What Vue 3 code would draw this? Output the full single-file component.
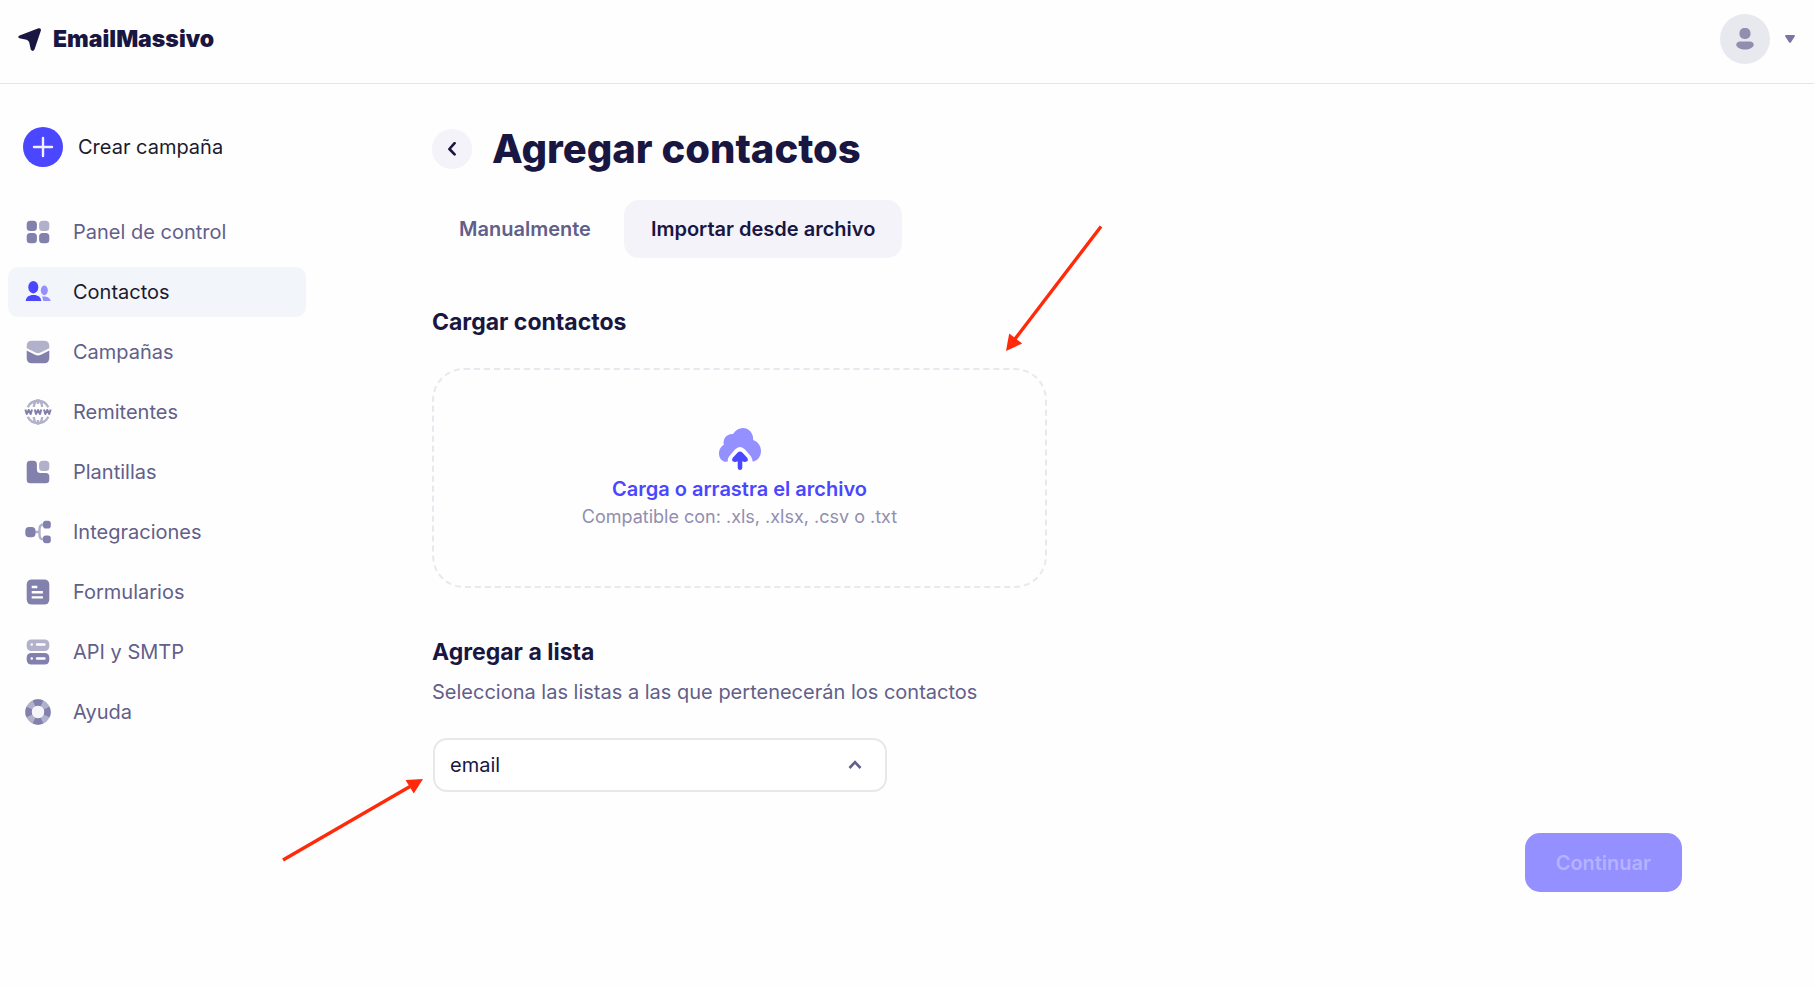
<script setup>
import { ref } from 'vue'

const navItems = [
  { id: 'panel', label: 'Panel de control' },
  { id: 'contacts', label: 'Contactos' },
  { id: 'campaigns', label: 'Campañas' },
  { id: 'senders', label: 'Remitentes' },
  { id: 'templates', label: 'Plantillas' },
  { id: 'integrations', label: 'Integraciones' },
  { id: 'forms', label: 'Formularios' },
  { id: 'api', label: 'API y SMTP' },
  { id: 'help', label: 'Ayuda' },
]
const current = ref('contacts')
const tabs = ['Manualmente', 'Importar desde archivo']
const activeTab = ref(1)
const list = ref('email')
</script>

<template>
  <div class="page">
    <header class="topbar">
      <a class="brand" href="#">
        <svg class="brand-mark" viewBox="0 0 22 22" aria-hidden="true">
          <path d="M1.5 7.2 19.6 .3Q22.3-.2 21.9 2.4L15.9 20.4Q14 23.4 12.2 20.6L10.7 13.6Q10 11.7 8.200 11.200L1.300 9.700Q-1 8.500 1.500 7.200Z" />
        </svg>
        <span>EmailMassivo</span>
      </a>
      <button class="account" type="button" aria-label="Cuenta">
        <span class="avatar">
          <svg width="18" height="22" viewBox="0 0 18 22" aria-hidden="true">
            <rect x="3.500" y="0" width="11" height="11" rx="4.800" />
            <path d="M3.500 13.500H14.500Q17.800 14 17.800 17C17 19.800 13 21.600 9 21.600S1 19.800.2 17Q.2 14 3.500 13.500Z" />
          </svg>
        </span>
        <svg class="caret" width="10" height="8" viewBox="0 0 10 8" aria-hidden="true">
          <path d="M1 0H9Q10.400.3 9.700 1.600L6 7.200Q5 8.400 4 7.200L.3 1.600Q-.4.3 1 0Z" />
        </svg>
      </button>
    </header>

    <div class="body">
      <aside class="sidebar">
        <button class="create" type="button">
          <svg width="40" height="40" viewBox="0 0 40 40" aria-hidden="true">
            <circle cx="20" cy="20" r="20" fill="#4b46ff" />
            <path d="M20 11V29M11 20H29" stroke="#f3f1ff" stroke-width="2.400" stroke-linecap="round" />
          </svg>
          <span>Crear campaña</span>
        </button>

        <nav class="nav">
          <a
            v-for="item in navItems"
            :key="item.id"
            href="#"
            class="nav-item"
            :class="{ active: item.id === current }"
            @click.prevent="current = item.id"
          >
            <svg class="nav-icon" viewBox="0 0 28 28" aria-hidden="true">
              <g v-if="item.id === 'panel'">
                <rect class="dark" x="2.700" y="2.700" width="10.200" height="10.200" rx="3.500" />
                <rect class="light" x="15.100" y="2.700" width="10.200" height="10.200" rx="3.500" />
                <rect class="dark" x="2.700" y="15.100" width="10.200" height="10.200" rx="3.500" />
                <rect class="dark" x="15.100" y="15.100" width="10.200" height="10.200" rx="3.500" />
              </g>
              <g v-else-if="item.id === 'contacts'">
                <ellipse class="dark" cx="9.300" cy="9.200" rx="5" ry="6.200" />
                <path class="dark" d="M1.700 23C2 19.200 4.600 17 9.500 17S16.800 19.200 17.300 23Z" />
                <ellipse class="light" cx="20.300" cy="12.400" rx="3.500" ry="4.800" />
                <path class="light" d="M18 18.700C22.500 18 26 19.500 26.700 23H19.200Q19 20.500 18 18.700Z" />
              </g>
              <g v-else-if="item.id === 'campaigns'">
                <path class="light" d="M8 2.700H20Q25.300 2.700 25.300 8V10.200L16.500 14.600Q14 15.800 11.500 14.600L2.700 10.200V8Q2.700 2.700 8 2.700Z" />
                <path class="dark" d="M2.700 12.600 11 16.800Q14 18.200 17 16.800L25.300 12.600V20Q25.300 25.300 20 25.300H8Q2.700 25.300 2.700 20Z" />
              </g>
              <g v-else-if="item.id === 'senders'">
                <g class="light-line">
                  <path d="M3.700 9.200A11.500 11.500 0 0 1 24.300 9.200M3.700 18.800A11.500 11.500 0 0 0 24.300 18.800M9.800 9C10.700 0 17.300 0 18.200 9M9.800 19C10.700 28 17.300 28 18.200 19M14 2.500V6M14 22V25.500" />
                </g>
                <path class="dark-line" d="M1.400 11.500 2.700 16 4.700 12 6.700 16 8 11.500M10.700 11.500 12 16 14 12 16 16 17.300 11.500M20 11.500 21.300 16 23.300 12 25.300 16 26.600 11.500" />
              </g>
              <g v-else-if="item.id === 'templates'">
                <path class="dark" d="M6.200 2.700H9.400Q12.900 2.700 12.900 6.200V11.500Q12.900 15.100 16.500 15.100H21.800Q25.300 15.100 25.300 18.600V21.800Q25.300 25.300 21.800 25.300H6.200Q2.700 25.300 2.700 21.800V6.200Q2.700 2.700 6.200 2.700Z" />
                <rect class="light" x="15.100" y="2.700" width="10.200" height="10.200" rx="3.500" />
              </g>
              <g v-else-if="item.id === 'integrations'">
                <path class="light-line" d="M10 14H15.500M20 6.500Q15.500 6.500 15.500 11V17Q15.500 21.500 20 21.500" />
                <rect class="dark" x="1.300" y="9" width="10.200" height="10.200" rx="3.800" />
                <rect class="dark" x="19" y="2.700" width="7.800" height="7.800" rx="2.800" />
                <rect class="dark" x="19" y="17.500" width="7.800" height="7.800" rx="2.800" />
              </g>
              <g v-else-if="item.id === 'forms'">
                <rect class="dark" x="2.700" y="1.400" width="22.600" height="25.200" rx="5" />
                <path class="cut" d="M7.700 9H13.300M7.700 14.200H18.900M7.700 19.400H18.900" />
              </g>
              <g v-else-if="item.id === 'api'">
                <rect class="light" x="2.700" y="1.400" width="22.600" height="11.600" rx="4.500" />
                <rect class="dark" x="2.700" y="15" width="22.600" height="11.600" rx="4.500" />
                <path class="cut round" d="M7.700 6.500H7.800M13 6.500H20.500M7.700 20.500H7.800M13 20.500H20.500" />
              </g>
              <g v-else>
                <circle class="ring-light" cx="14" cy="14" r="9.400" />
                <circle class="ring-dark" cx="14" cy="14" r="9.400" pathLength="80" />
                <circle cx="14" cy="14" r="6.200" fill="#f5f5f9" />
              </g>
            </svg>
            <span>{{ item.label }}</span>
          </a>
        </nav>
      </aside>

      <main class="content">
        <div class="title-row">
          <button class="back" type="button" aria-label="Volver">
            <svg width="8" height="14" viewBox="0 0 8 14" aria-hidden="true">
              <path d="M6.600 1.200 1.400 7 6.600 12.400" />
            </svg>
          </button>
          <h1>Agregar contactos</h1>
        </div>

        <div class="tabs" role="tablist">
          <button
            v-for="(tab, i) in tabs"
            :key="tab"
            type="button"
            role="tab"
            class="tab"
            :class="{ active: i === activeTab }"
            :aria-selected="i === activeTab"
            @click="activeTab = i"
          >{{ tab }}</button>
        </div>

        <h2 class="section-title">Cargar contactos</h2>
        <div class="upload">
          <label class="dropzone" for="contacts-file">
            <svg class="cloud" width="42" height="42" viewBox="0 0 42 42" aria-hidden="true">
              <path fill="#9490ff" d="M6.500 33.800C2.200 33.200 0 29.500 0 25.500C0 21.500 2 18.200 4.800 17C3.500 11 7.500 5.500 14 6C16.500 2 20 0 24 0C30 0 34.500 5 34.200 12C38.500 13.500 42 17.500 42 23C42 28.500 38.500 33 33.500 33.500C33.600 30.600 32.200 28.800 30.300 26.600L26 21.600C22.700 18.200 19.300 18.200 16 21.600L11.700 26.600C9.500 29 8.300 31 8.800 33.600Z" />
              <path fill="#4b46ff" d="M18.700 24.600Q21 22.600 23.300 24.600L28 29.600C30.600 33 27 35.300 23.300 33.200V39.800Q23.200 42 21 42T18.700 39.800V33.200C15 35.300 11.400 33 14 29.600Z" />
            </svg>
            <span class="drop-title">Carga o arrastra el archivo</span>
            <span class="drop-note">Compatible con: .xls, .xlsx, .csv o .txt</span>
            <input id="contacts-file" class="file" type="file" accept=".xls,.xlsx,.csv,.txt" />
          </label>
          <svg class="pointer to-upload" width="100" height="128" viewBox="0 0 100 128" aria-hidden="true">
            <path class="shaft" d="M97 2.500 11 115" />
            <path class="head" d="M2 127 5.200 109.500 18.200 119.500Z" />
          </svg>
        </div>

        <h2 class="section-title"><label for="contact-list">Agregar a lista</label></h2>
        <p class="list-note">Selecciona las listas a las que pertenecerán los contactos</p>
        <div class="select-wrap">
          <select id="contact-list" v-model="list">
            <option value="email">email</option>
          </select>
          <svg class="chevron" width="14" height="10" viewBox="0 0 14 10" aria-hidden="true">
            <path d="M1.500 8 7 2.200 12.500 8" />
          </svg>
          <svg class="pointer to-list" width="142" height="86" viewBox="0 0 142 86" aria-hidden="true">
            <path class="shaft" d="M1 83 128 9.500" />
            <path class="head" d="M141 2 123.500 3 131.800 16.500Z" />
          </svg>
        </div>

        <div class="actions">
          <button class="continue" type="button" disabled>Continuar</button>
        </div>
      </main>
    </div>
  </div>
</template>

<style>
body {
  background: #fefefe;
}
</style>

<style scoped>
.page,
.page * {
  box-sizing: border-box;
}
.page {
  min-height: 100vh;
  font-family: Inter, "Liberation Sans", sans-serif;
  font-size: 20px;
  line-height: 28px;
  color: #191641;
}
button,
select {
  font: inherit;
  color: inherit;
  border: 0;
  background: none;
  padding: 0;
  cursor: pointer;
}
a {
  color: inherit;
  text-decoration: none;
}
h1,
h2,
p {
  margin: 0;
}
.topbar {
  display: flex;
  align-items: center;
  justify-content: space-between;
  height: 84px;
  padding: 0 19px 5px 18px;
  border-bottom: 1px solid #e6e6ea;
}
.brand {
  display: flex;
  align-items: center;
  gap: 12px;
  font-size: 23px;
  line-height: 30px;
  font-weight: 900;
}
.brand-mark {
  width: 23px;
  height: 23px;
  fill: #191641;
}
.account {
  display: flex;
  align-items: center;
  gap: 15px;
}
.avatar {
  display: flex;
  align-items: center;
  justify-content: center;
  width: 50px;
  height: 50px;
  border-radius: 50%;
  background: #e8e8ef;
  fill: #918eb0;
}
.caret {
  fill: #7a76a3;
}
.body {
  display: flex;
}
.sidebar {
  flex: none;
  width: 314px;
  padding: 43px 8px 0;
}
.create {
  display: flex;
  align-items: center;
  gap: 15px;
  padding: 0 15px;
  color: #1c1a2e;
}
.nav {
  display: flex;
  flex-direction: column;
  gap: 10px;
  margin-top: 40px;
}
.nav-item {
  display: flex;
  align-items: center;
  gap: 21px;
  height: 50px;
  padding: 0 16px;
  border-radius: 10px;
  color: #625f8a;
}
.nav-item.active {
  background: #f2f5fa;
  color: #1c1a2e;
}
.nav-icon {
  width: 28px;
  height: 28px;
}
.dark {
  fill: #8280ac;
}
.light {
  fill: #b2b1cb;
}
.active .dark {
  fill: #4b46ff;
}
.active .light {
  fill: #9490ff;
}
.light-line {
  fill: none;
  stroke: #b2b1cb;
  stroke-width: 2.4;
}
.dark-line {
  fill: none;
  stroke: #8280ac;
  stroke-width: 2;
  stroke-linejoin: round;
}
.cut {
  fill: none;
  stroke: #fefefe;
  stroke-width: 2.4;
}
.cut.round {
  stroke-linecap: round;
}
.ring-light,
.ring-dark {
  fill: none;
  stroke-width: 6.6;
  stroke: #b2b1cb;
}
.ring-dark {
  stroke: #8280ac;
  stroke-dasharray: 11 9;
  stroke-dashoffset: 5.5;
}
.content {
  flex: 1;
  min-width: 0;
  padding: 41px 132px 40px 118px;
}
.title-row {
  display: flex;
  align-items: center;
  gap: 20px;
}
.back {
  display: flex;
  align-items: center;
  justify-content: center;
  width: 40px;
  height: 40px;
  border-radius: 50%;
  background: #f3f3f9;
}
.back path {
  fill: none;
  stroke: #191641;
  stroke-width: 2.6;
  stroke-linecap: round;
  stroke-linejoin: round;
}
h1 {
  font-size: 40px;
  line-height: 48px;
  font-weight: 800;
}
.tabs {
  display: flex;
  gap: 6px;
  margin-top: 27px;
}
.tab {
  height: 58px;
  padding: 0 27px;
  border-radius: 15px;
  font-weight: 600;
  color: #625f8a;
}
.tab.active {
  background: #f3f3f9;
  color: #191641;
}
h2 {
  font-size: 23px;
  line-height: 30px;
  font-weight: 700;
}
.section-title {
  margin-top: 49px;
}
.upload {
  position: relative;
  max-width: 615px;
  margin-top: 31px;
}
.dropzone {
  display: flex;
  flex-direction: column;
  align-items: center;
  justify-content: center;
  min-height: 220px;
  padding-top: 2px;
  border: 2px dashed #e8e8ef;
  border-radius: 32px;
  cursor: pointer;
}
.cloud {
  margin-bottom: 5px;
}
.drop-title {
  font-weight: 600;
  color: #4b46ff;
}
.drop-note {
  font-size: 18px;
  color: #918eb0;
}
.file {
  position: absolute;
  width: 1px;
  height: 1px;
  opacity: 0;
}
.list-note {
  margin-top: 11px;
  color: #625f8a;
}
.select-wrap {
  position: relative;
  max-width: 454px;
  margin: 32px 0 0 1px;
}
select {
  appearance: none;
  display: block;
  width: 100%;
  height: 54px;
  padding: 0 50px 0 15px;
  border: 2px solid #e8e8eb;
  border-radius: 14px;
  background: #ffffff;
}
.chevron {
  position: absolute;
  top: 22px;
  right: 25px;
  pointer-events: none;
}
.chevron path {
  fill: none;
  stroke: #625f8a;
  stroke-width: 2.6;
}
.pointer {
  position: absolute;
  pointer-events: none;
}
.to-upload {
  right: -57px;
  bottom: 236px;
}
.to-list {
  right: 100%;
  top: 39px;
  margin-right: 9px;
}
.shaft {
  fill: none;
  stroke: #ff2a0a;
  stroke-width: 3.4;
}
.head {
  fill: #ff2a0a;
}
.actions {
  display: flex;
  justify-content: flex-end;
  margin-top: 41px;
}
.continue {
  height: 59px;
  padding: 0 31px;
  border-radius: 15px;
  background: #9490ff;
  color: #b5b2ff;
  font-weight: 600;
  cursor: default;
}
</style>
